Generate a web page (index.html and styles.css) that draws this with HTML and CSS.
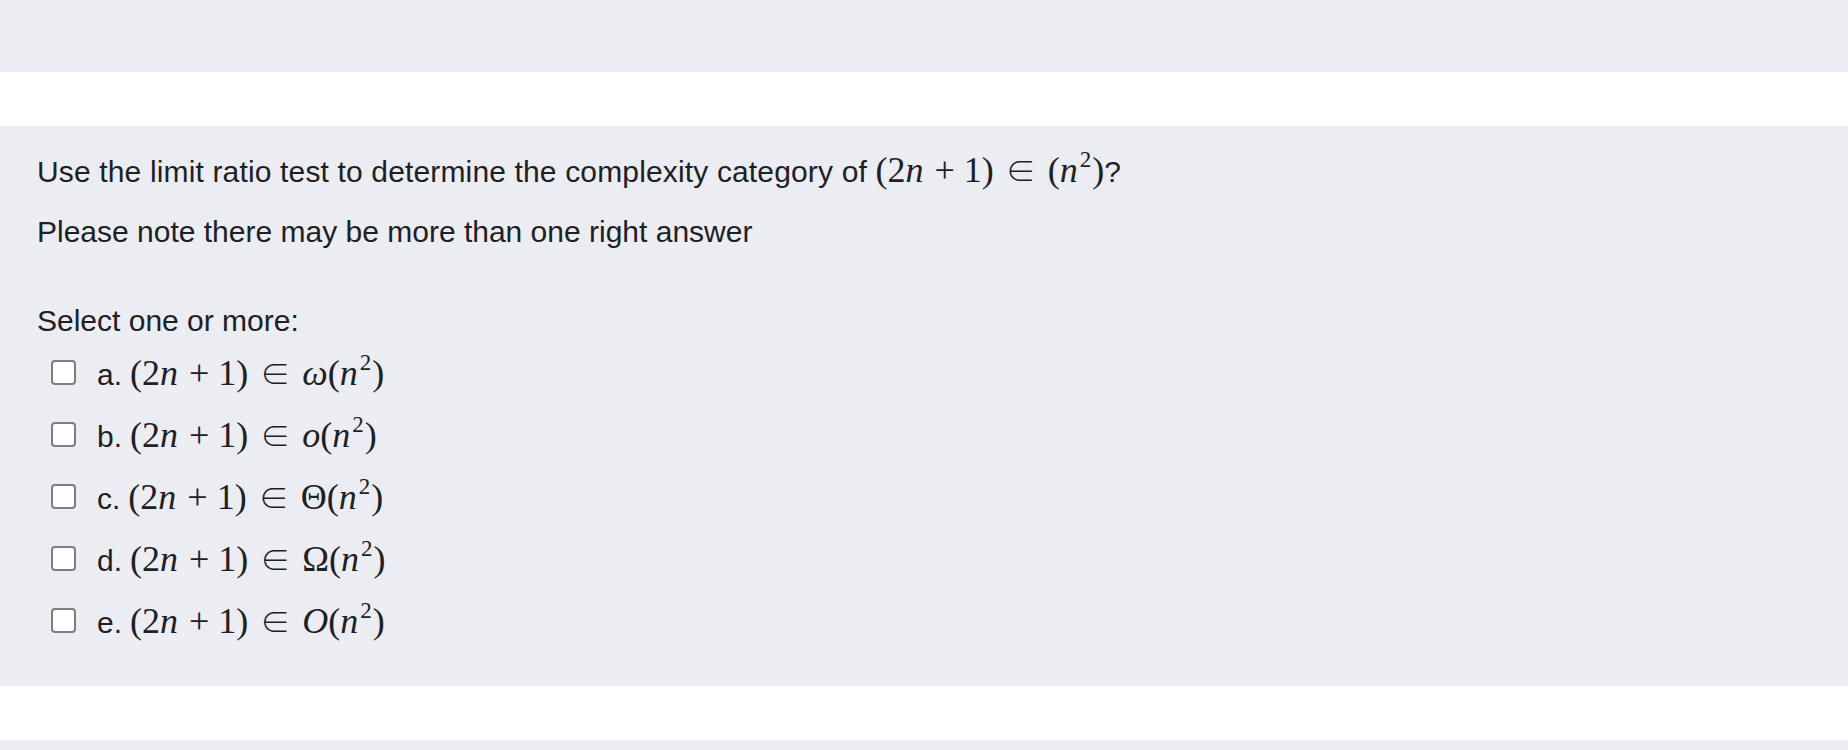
FILE: index.html
```html
<!DOCTYPE html>
<html>
<head>
<meta charset="utf-8">
<link rel="stylesheet" href="styles.css">
</head>
<body>
<div class="band top"></div>
<div class="gap"></div>
<div class="panel">
  <p class="qtext">Use the limit ratio test to determine the complexity category of <span class="math">(2<i>n</i><span class="bin">+</span>1)<span class="rel">∈</span>(<i>n</i><sup>2</sup>)</span>?</p>
  <p class="qtext">Please note there may be more than one right answer</p>
  <div class="prompt">Select one or more:</div>
  <div class="answers">
    <label class="opt"><span class="box"></span><span class="lbl">a.</span><span class="math">(2<i>n</i><span class="bin">+</span>1)<span class="rel">∈</span><i>ω</i>(<i>n</i><sup>2</sup>)</span></label>
    <label class="opt"><span class="box"></span><span class="lbl">b.</span><span class="math">(2<i>n</i><span class="bin">+</span>1)<span class="rel">∈</span><i>o</i>(<i>n</i><sup>2</sup>)</span></label>
    <label class="opt"><span class="box"></span><span class="lbl">c.</span><span class="math">(2<i>n</i><span class="bin">+</span>1)<span class="rel">∈</span>Θ(<i>n</i><sup>2</sup>)</span></label>
    <label class="opt"><span class="box"></span><span class="lbl">d.</span><span class="math">(2<i>n</i><span class="bin">+</span>1)<span class="rel">∈</span>Ω(<i>n</i><sup>2</sup>)</span></label>
    <label class="opt"><span class="box"></span><span class="lbl">e.</span><span class="math">(2<i>n</i><span class="bin">+</span>1)<span class="rel">∈</span><i>O</i>(<i>n</i><sup>2</sup>)</span></label>
  </div>
</div>
<div class="gap"></div>
<div class="band bottom"></div>
</body>
</html>
```
FILE: styles.css
```css
html, body {
  margin: 0;
  padding: 0;
  background: #ffffff;
}
body {
  font-family: "Liberation Sans", Arial, sans-serif;
  font-size: 30px;
  color: #1d2125;
}
.band {
  background: #ecedf2;
}
.top {
  height: 72px;
}
.bottom {
  height: 10px;
}
.gap {
  height: 54px;
}
.panel {
  background: #ecedf2;
  height: 560px;
  box-sizing: border-box;
  padding: 21px 37px 0;
}
.qtext {
  margin: 0 0 15px;
  line-height: 45px;
}
.qtext:first-child {
  letter-spacing: 0.15px;
}
.math {
  font-family: "Liberation Serif", "Times New Roman", serif;
  font-size: 36px;
  white-space: nowrap;
  letter-spacing: 0;
}
.math i {
  font-style: italic;
}
.math sup {
  font-size: 23px;
  vertical-align: 0;
  position: relative;
  top: -15px;
  line-height: 0;
  margin-left: 2px;
  margin-right: 1px;
}
.bin {
  margin: 0 9px 0 11px;
}
.rel {
  font-family: "Noto Sans CJK JP", "DejaVu Serif", serif;
  font-size: 30px;
  font-weight: 300;
  margin: 0 12px;
}
.prompt {
  margin-top: 44px;
  line-height: 45px;
}
.answers {
  display: flex;
  flex-direction: column;
  padding-left: 14px;
  padding-top: 7px;
}
.opt {
  display: flex;
  align-items: baseline;
  height: 62px;
}
.box {
  width: 21px;
  height: 21px;
  border: 2px solid #7b7e82;
  border-radius: 4px;
  background: #ffffff;
  margin-right: 21px;
  flex: none;
}
.lbl {
  margin-right: 8px;
}
```
